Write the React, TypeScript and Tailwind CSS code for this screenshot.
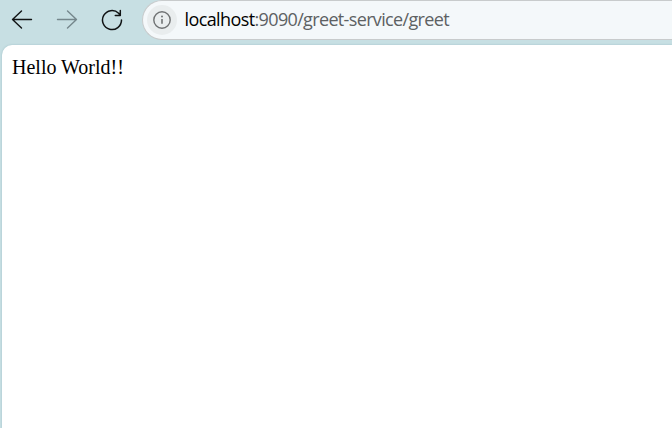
function BackIcon() {
  return (
    <svg width="22" height="20" viewBox="0 0 22 20" fill="none" stroke="#101314" strokeWidth="1.4" strokeLinecap="round" strokeLinejoin="round">
      <path d="M20.5 9.5H1.5M10.5 1 1.5 9.5l9 8.5" />
    </svg>
  );
}

function ForwardIcon() {
  return (
    <svg width="22" height="20" viewBox="0 0 22 20" fill="none" stroke="#75878c" strokeWidth="1.4" strokeLinecap="round" strokeLinejoin="round">
      <path d="M1.5 9.5h19M11.5 1l9 8.5-9 8.5" />
    </svg>
  );
}

function ReloadIcon() {
  return (
    <svg width="22" height="22" viewBox="0 0 22 22" fill="none" stroke="#101314" strokeWidth="1.5" strokeLinecap="round" strokeLinejoin="round">
      <path d="M20.5 11A9.5 9.5 0 1 1 17.6 4.2L19.3 6.2M19.3 1.5v5h-5" />
    </svg>
  );
}

function InfoIcon() {
  return (
    <svg width="18" height="18" viewBox="0 0 18 18" fill="none" stroke="#6f7273">
      <circle cx="9" cy="9" r="8.2" strokeWidth="1.4" />
      <path d="M9 8v4.8" strokeWidth="1.6" />
      <circle cx="9" cy="5.5" r="1" fill="#6f7273" stroke="none" />
    </svg>
  );
}

export default function App() {
  return (
    <div className="flex h-[428px] w-[672px] flex-col overflow-hidden bg-[#c7dfe3]">
      <header className="flex h-[45px] shrink-0 items-start pl-[11px]">
        <nav className="flex h-10 items-center">
          <button aria-label="Back"><BackIcon /></button>
          <button aria-label="Forward" className="ml-[23px]"><ForwardIcon /></button>
          <button aria-label="Reload" className="ml-[23px]"><ReloadIcon /></button>
        </nav>
        <div className="ml-[19px] flex h-10 flex-1 items-center rounded-l-full border border-r-0 border-[#c8cbcc] bg-[#f4f8fa] pl-1">
          <span className="flex size-[30px] items-center justify-center rounded-full bg-[#e9edee]">
            <InfoIcon />
          </span>
          <span className="ml-[7.5px] whitespace-nowrap pb-0.5 font-['Open_Sans','Noto_Sans',sans-serif] text-[18px] leading-[36px] tracking-[-0.65px] text-[#5d6163]">
            <span className="tracking-[-0.6px] text-black">localhost</span>:9090/greet-service/greet
          </span>
        </div>
      </header>
      <main className="ml-[2px] flex-1 rounded-tl-[10px] bg-white pl-[10px] pt-[11px] shadow-[0_0_2px_rgba(70,130,140,0.35)]">
        <p className="font-['Liberation_Serif',serif] text-[20px] leading-[22px] text-black">Hello World!!</p>
      </main>
    </div>
  );
}
